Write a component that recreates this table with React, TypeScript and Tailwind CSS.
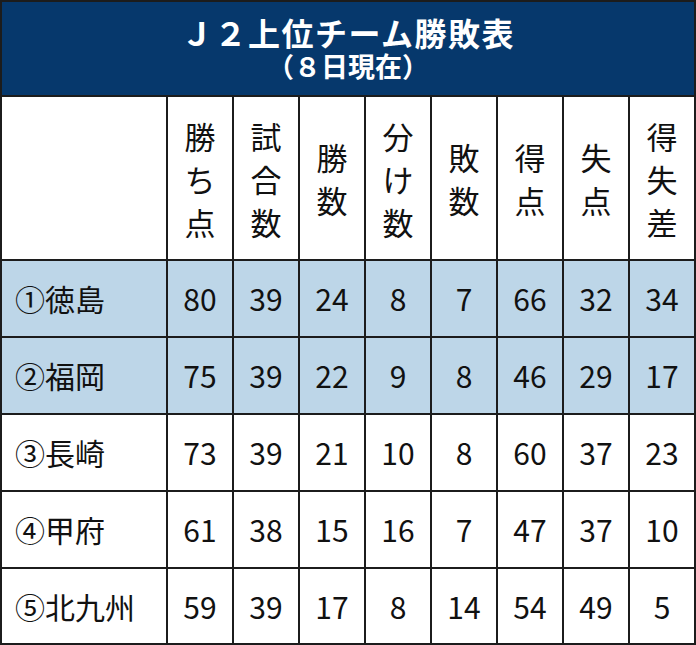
import React from "react";

const headers = [
  ["勝", "ち", "点"],
  ["試", "合", "数"],
  ["勝", "数"],
  ["分", "け", "数"],
  ["敗", "数"],
  ["得", "点"],
  ["失", "点"],
  ["得", "失", "差"],
];

const rows = [
  { team: "①徳島", values: [80, 39, 24, 8, 7, 66, 32, 34], hl: true },
  { team: "②福岡", values: [75, 39, 22, 9, 8, 46, 29, 17], hl: true },
  { team: "③長崎", values: [73, 39, 21, 10, 8, 60, 37, 23], hl: false },
  { team: "④甲府", values: [61, 38, 15, 16, 7, 47, 37, 10], hl: false },
  { team: "⑤北九州", values: [59, 39, 17, 8, 14, 54, 49, 5], hl: false },
];

const font = { fontFamily: '"Noto Sans CJK JP", "Noto Sans", sans-serif' };

export default function App() {
  return (
    <div className="w-[696px] h-[645px] bg-[#1c1c1c] p-[2px] text-[#111]" style={font}>
      {/* Title */}
      <div className="h-[93px] bg-[#06386c] text-white font-bold flex flex-col items-center pt-[12px]">
        <div className="text-[32px] leading-[36px] tracking-[1.5px]">Ｊ２上位チーム勝敗表</div>
        <div className="text-[27px] leading-[32px]">（８日現在）</div>
      </div>

      {/* Table */}
      <div className="mt-[2px] grid grid-cols-[164px_repeat(8,64px)] grid-rows-[162px_75px_75px_75px_75px_74px] gap-[2px]">
        <div className="bg-white" />
        {headers.map((chars, i) => (
          <div
            key={i}
            className="bg-white flex flex-col items-center justify-center text-[31px] leading-[43px]"
          >
            {chars.map((c, j) => (
              <span key={j}>{c}</span>
            ))}
          </div>
        ))}

        {rows.map((r) => (
          <React.Fragment key={r.team}>
            <div
              className={`${r.hl ? "bg-[#bdd6e8]" : "bg-white"} flex items-center pl-[13px] text-[30px]`}
            >
              {r.team}
            </div>
            {r.values.map((v, k) => (
              <div
                key={k}
                className={`${r.hl ? "bg-[#bdd6e8]" : "bg-white"} flex items-center justify-center text-[30px]`}
              >
                {v}
              </div>
            ))}
          </React.Fragment>
        ))}
      </div>
    </div>
  );
}
